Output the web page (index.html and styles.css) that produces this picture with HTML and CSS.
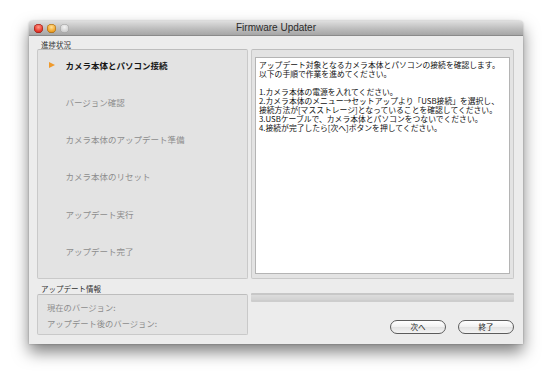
FILE: index.html
```html
<!DOCTYPE html>
<html lang="ja">
<head>
<meta charset="utf-8">
<title>Firmware Updater</title>
<link rel="stylesheet" href="styles.css">
</head>
<body>
<div class="stage">
  <div class="window">
    <div class="titlebar">
      <div class="lights">
        <span class="light red"></span>
        <span class="light yellow"></span>
        <span class="light gray"></span>
      </div>
      <div class="title">Firmware Updater</div>
    </div>
    <div class="content">
      <div class="label label-top">進捗状況</div>
      <div class="panel steps">
        <div class="step active"><span class="arrow"></span><span class="step-text">カメラ本体とパソコン接続</span></div>
        <div class="step"><span class="step-text">バージョン確認</span></div>
        <div class="step"><span class="step-text">カメラ本体のアップデート準備</span></div>
        <div class="step"><span class="step-text">カメラ本体のリセット</span></div>
        <div class="step"><span class="step-text">アップデート実行</span></div>
        <div class="step"><span class="step-text">アップデート完了</span></div>
      </div>
      <div class="panel message-panel">
        <div class="message">
          <p>アップデート対象となるカメラ本体とパソコンの接続を確認します。<br>以下の手順で作業を進めてください。</p>
          <p>1.カメラ本体の電源を入れてください。<br>2.カメラ本体のメニュー→セットアップより「USB接続」を選択し、<br>接続方法が[マスストレージ]となっていることを確認してください。<br>3.USBケーブルで、カメラ本体とパソコンをつないでください。<br>4.接続が完了したら[次へ]ボタンを押してください。</p>
        </div>
      </div>
      <div class="label label-info">アップデート情報</div>
      <div class="panel info">
        <div class="info-row">現在のバージョン:</div>
        <div class="info-row">アップデート後のバージョン:</div>
      </div>
      <div class="actions">
        <div class="progress"></div>
        <div class="buttons">
          <button class="btn">次へ</button>
          <button class="btn">終了</button>
        </div>
      </div>
    </div>
  </div>
</div>
</body>
</html>
```

FILE: styles.css
```css
* { box-sizing: border-box; }
html, body { margin: 0; padding: 0; background: #ffffff; }
body {
  width: 550px;
  height: 386px;
  overflow: hidden;
  font-family: "Noto Sans CJK JP", "Noto Sans", sans-serif;
}
.stage {
  padding: 21px 0 0 29px;
}
.window {
  width: 494px;
  height: 323px;
  background: #ececec;
  border-radius: 4px 4px 0 0;
  box-shadow: 0 8px 16px rgba(0,0,0,0.5), 0 0 2px rgba(0,0,0,0.3);
  display: flex;
  flex-direction: column;
}
.titlebar {
  height: 15px;
  flex: none;
  background: linear-gradient(#dedede, #bababa 60%, #a6a6a6);
  border-bottom: 1px solid #8a8a8a;
  border-radius: 4px 4px 0 0;
  display: flex;
  align-items: center;
  position: relative;
}
.lights {
  display: flex;
  gap: 4px;
  padding-left: 5px;
}
.light {
  width: 9px;
  height: 9px;
  border-radius: 50%;
  display: block;
}
.light.red {
  background: radial-gradient(circle at 50% 35%, #ff9a8a 0, #e8392c 55%, #a8140c 100%);
  box-shadow: inset 0 0 0 0.5px #8a1a14;
}
.light.yellow {
  background: radial-gradient(circle at 50% 35%, #ffe29a 0, #f2a52a 55%, #b8700c 100%);
  box-shadow: inset 0 0 0 0.5px #9a6212;
}
.light.gray {
  background: radial-gradient(circle at 50% 35%, #f4f4f4 0, #cfcfcf 60%, #a8a8a8 100%);
  box-shadow: inset 0 0 0 0.5px #9a9a9a;
}
.title {
  position: absolute;
  left: 0;
  right: 0;
  top: 0;
  bottom: 0;
  text-align: center;
  font-family: "Liberation Sans", "DejaVu Sans", sans-serif;
  font-size: 10px;
  line-height: 14px;
  color: #2a2a2a;
}
.content {
  flex: 1;
  display: grid;
  grid-template-columns: 211px 263px;
  grid-template-rows: 13px 230px 15px 41px;
  column-gap: 3px;
  padding: 0 9px 0 8px;
}
.label {
  font-size: 7.5px;
  color: #303030;
  padding-left: 4px;
  line-height: 10px;
}
.label-top {
  grid-column: 1;
  grid-row: 1;
  padding-top: 4px;
}
.label-info {
  grid-column: 1;
  grid-row: 3;
  padding-top: 5px;
}
.panel {
  background: #e3e3e3;
  border: 1px solid #c9c9c9;
  border-top-color: #bdbdbd;
  border-radius: 2px;
}
.steps {
  grid-column: 1;
  grid-row: 2;
  display: flex;
  flex-direction: column;
}
.step {
  height: 37.3px;
  padding-top: 9.5px;
  padding-left: 27.5px;
  position: relative;
  font-size: 8.5px;
  line-height: 10px;
  color: #8d8d8d;
}
.step.active {
  color: #151515;
  font-weight: bold;
}
.arrow {
  position: absolute;
  left: 11px;
  top: 12px;
  width: 0;
  height: 0;
  border-left: 6px solid #ef9a2c;
  border-top: 3.5px solid transparent;
  border-bottom: 3.5px solid transparent;
}
.message-panel {
  grid-column: 2;
  grid-row: 2;
  padding: 7px 3px 4px 3px;
}
.message {
  height: 100%;
  background: #ffffff;
  border: 1px solid #b4b4b4;
  padding: 2px 3px;
  font-size: 7.8px;
  line-height: 9.05px;
  color: #111;
}
.message p {
  margin: 0 0 9.05px 0;
}
.info {
  grid-column: 1;
  grid-row: 4;
  padding: 4px 0 0 9px;
  font-size: 8.3px;
  color: #8d8d8d;
}
.info-row {
  line-height: 16px;
}
.actions {
  grid-column: 2;
  grid-row: 3 / span 2;
  padding-top: 14px;
  display: flex;
  flex-direction: column;
}
.progress {
  height: 9px;
  border-top: 2px solid #c7c7c7;
  border-bottom: 2px solid #cdcdcd;
  background: linear-gradient(#dcdcdc, #d2d2d2);
  border-radius: 1px;
}
.buttons {
  margin-top: 18px;
  display: flex;
  justify-content: flex-end;
  gap: 12px;
}
.btn {
  width: 56px;
  height: 14px;
  margin: 0;
  padding: 0;
  border: 1px solid #5c5c5c;
  border-radius: 7px;
  background: linear-gradient(#ffffff, #f0f0f0 50%, #e2e2e2 51%, #f4f4f4);
  font-family: "Noto Sans CJK JP", sans-serif;
  font-size: 7.5px;
  line-height: 12px;
  color: #222;
}
```
